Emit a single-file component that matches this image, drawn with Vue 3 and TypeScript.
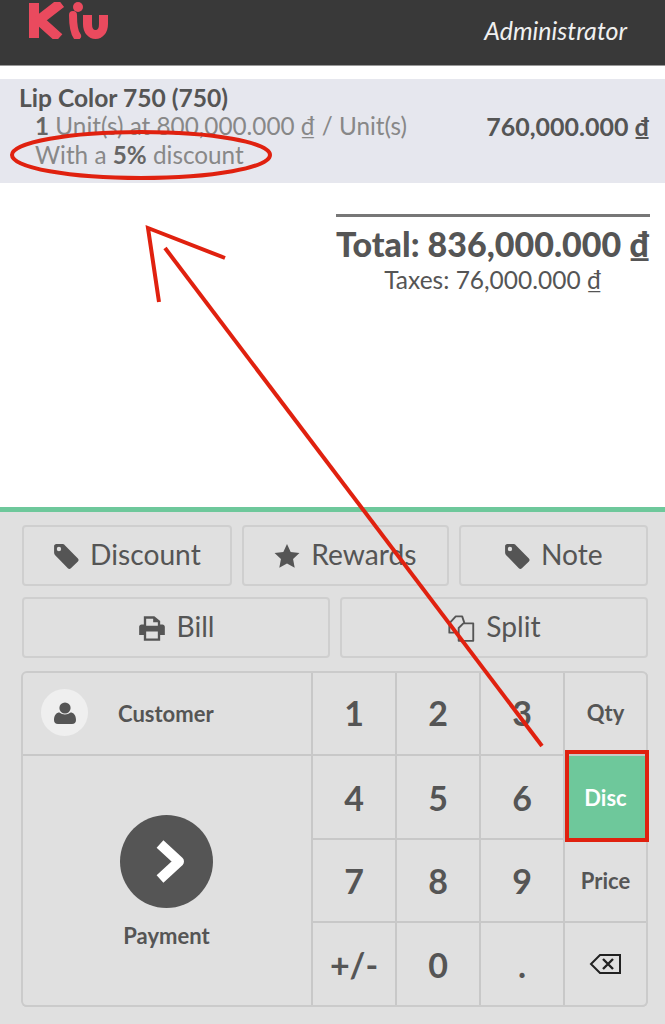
<template>
  <div class="pos">
    <header class="topbar">
      <svg class="logo" width="80" height="37" viewBox="0 0 80 37" fill="none" stroke="#ea4a5e" stroke-width="10">
        <path d="M5 1V36" />
        <path d="M32 1L10 18L30 36" />
        <path d="M44 13C44 22 45 30 48 34" stroke-width="8" stroke-linecap="round" />
        <circle cx="49" cy="5" r="5" fill="#ea4a5e" stroke="none" />
        <path d="M58.500 13V22C58.500 36 74.500 36 74.500 22V13" stroke-width="9" />
      </svg>
      <span class="username">Administrator</span>
    </header>

    <main class="order">
      <div class="orderline">
        <div class="line-info">
          <div class="product">Lip Color 750 (750)</div>
          <div class="detail"><b>1</b> Unit(s) at 800,000.000 ₫ / Unit(s)</div>
          <div class="detail">With a <b>5%</b> discount</div>
        </div>
        <div class="price">760,000.000 ₫</div>
      </div>
      <div class="summary">
        <div class="total">Total: 836,000.000 ₫</div>
        <div class="taxes">Taxes: 76,000.000 ₫</div>
      </div>
    </main>

    <section class="panel">
      <div class="control-row">
        <button v-for="b in topButtons" :key="b.label" class="control" :style="{ flexGrow: b.grow }">
          <svg width="26" height="26" viewBox="0 0 24 24" v-html="icons[b.icon]"></svg>
          <span class="control-label">{{ b.label }}</span>
        </button>
      </div>
      <div class="control-row">
        <button v-for="b in midButtons" :key="b.label" class="control" :style="{ flexGrow: 1 }">
          <svg width="28" height="28" viewBox="0 0 24 24" v-html="icons[b.icon]"></svg>
          <span class="control-label">{{ b.label }}</span>
        </button>
      </div>

      <div class="numpad">
        <div class="customer cell">
          <span class="avatar">
            <svg width="24" height="24" viewBox="0 0 24 24" fill="#555">
              <circle cx="12" cy="7" r="5.600" />
              <path d="M1 19c0-5 2.500-7.500 5.500-7.500 1.500 1.300 3.300 2 5.500 2s4-.7 5.500-2c3 0 5.500 2.500 5.500 7.500 0 2.500-1.500 4-4 4H5c-2.500 0-4-1.500-4-4z" />
            </svg>
          </span>
          <span class="customer-label">Customer</span>
        </div>
        <div class="payment cell">
          <span class="pay-circle">
            <svg width="40" height="48" viewBox="0 0 40 48" fill="none" stroke="#fff" stroke-width="10" stroke-linejoin="round">
              <path d="M13 7L32 24.500L13 42" />
            </svg>
          </span>
          <span class="pay-label">Payment</span>
        </div>
        <div v-for="k in keys" :key="k.label" class="cell key" :class="{ mode: k.mode, active: k.active }">
          <svg v-if="k.label === 'back'" width="34" height="24" viewBox="0 0 34 24" fill="none" stroke="#222" stroke-width="2">
            <path d="M31 3H11L2 12L11 21H31Z" />
            <path d="M14 7L24 17M24 7L14 17" stroke-width="2.400" />
          </svg>
          <template v-else>{{ k.label }}</template>
        </div>
      </div>
    </section>

    <svg class="marks" width="665" height="1024" viewBox="0 0 665 1024" fill="none" stroke="#e0210f">
      <ellipse cx="141" cy="155" rx="129" ry="23" stroke-width="4" />
      <path d="M542 746L165 248" stroke-width="4" />
      <path d="M159 302L148 228L225 258" stroke-width="4" />
      <rect x="567" y="752" width="80" height="88" stroke-width="4" />
    </svg>
  </div>
</template>

<script setup lang="ts">
type IconName = "tag" | "star" | "print" | "copy";

const icons: Record<IconName, string> = {
  tag: '<path fill="#555" fill-rule="evenodd" d="M1 3C1 1.900 1.900 1 3 1H8.500C9.500 1 10.200 1.300 10.900 2L23 14.200C23.800 15 23.800 16.200 23 17L16.500 23.300C15.700 24.100 14.500 24.100 13.700 23.300L2 11.200C1.300 10.500 1 9.700 1 8.800ZM5.500 3.500A2 2 0 1 0 5.500 7.500A2 2 0 1 0 5.500 3.500Z"/>',
  star: '<path fill="#555" d="M12 1L15.400 8.200L23.500 9.300L17.600 14.800L19.100 22.800L12 19L4.900 22.800L6.400 14.800L.5 9.300L8.600 8.200Z"/>',
  print: '<path fill="#555" fill-rule="evenodd" d="M5 2H14L19 6V9H21C22.100 9 23 9.900 23 11V18H19V23H5V18H1V11C1 9.900 1.900 9 3 9H5ZM7 4V10H17V7H13V4ZM7 15V21H17V15Z"/>',
  copy: '<path fill="none" stroke="#555" stroke-width="1.600" stroke-linejoin="round" d="M14 8H22.500V23H10V12ZM6 16H2V8L7.500 2H13L15 8"/>',
};

const topButtons: { label: string; icon: IconName; grow: number }[] = [
  { label: "Discount", icon: "tag", grow: 210 },
  { label: "Rewards", icon: "star", grow: 207 },
  { label: "Note", icon: "tag", grow: 189 },
];

const midButtons: { label: string; icon: IconName }[] = [
  { label: "Bill", icon: "print" },
  { label: "Split", icon: "copy" },
];

const keys: { label: string; mode?: boolean; active?: boolean }[] = [
  { label: "1" },
  { label: "2" },
  { label: "3" },
  { label: "Qty", mode: true },
  { label: "4" },
  { label: "5" },
  { label: "6" },
  { label: "Disc", mode: true, active: true },
  { label: "7" },
  { label: "8" },
  { label: "9" },
  { label: "Price", mode: true },
  { label: "+/-" },
  { label: "0" },
  { label: "." },
  { label: "back", mode: true },
];
</script>

<style>
html,
body {
  margin: 0;
  background: #fff;
}
</style>

<style scoped>
.pos {
  position: relative;
  width: 665px;
  height: 1024px;
  overflow: hidden;
  display: flex;
  flex-direction: column;
  font-family: Lato, "Open Sans", sans-serif;
  color: #555;
}

.topbar {
  height: 66px;
  flex-shrink: 0;
  box-sizing: border-box;
  background: #393939;
  border-bottom: 1px solid #999;
  display: flex;
  align-items: flex-start;
  justify-content: space-between;
  padding: 0 38px 0 29px;
}
.logo {
  margin-top: 2px;
}
.username {
  margin-top: 15px;
  color: #f0f0f0;
  font-size: 25px;
  line-height: 30px;
  font-style: italic;
}

.order {
  flex: 1;
  padding-top: 13px;
  background: #fff;
}
.orderline {
  height: 104px;
  box-sizing: border-box;
  background: #e6e7ee;
  padding: 5px 15px 0 19px;
  display: flex;
  justify-content: space-between;
}
.product {
  font-size: 24.600px;
  line-height: 28px;
  font-weight: 700;
  color: #555;
}
.detail {
  padding-left: 16px;
  font-size: 24.300px;
  line-height: 28.500px;
  color: #888;
}
.detail b {
  color: #666;
}
.price {
  margin-top: 28px;
  font-size: 25px;
  line-height: 28px;
  font-weight: 700;
  color: #555;
}
.summary {
  margin: 31px 15px 0 auto;
  width: 314px;
  border-top: 3px solid #777;
  text-align: center;
}
.total {
  margin-top: 8px;
  font-size: 34px;
  line-height: 38px;
  font-weight: 900;
  white-space: nowrap;
}
.taxes {
  margin-top: 2px;
  font-size: 24.500px;
  line-height: 30px;
}

.panel {
  height: 517px;
  flex-shrink: 0;
  box-sizing: border-box;
  background: #e0e0e0;
  border-top: 5px solid #6ec89b;
  padding: 13px 17px 0 22px;
}
.control-row {
  display: flex;
  gap: 10px;
  margin-bottom: 11px;
}
.control {
  flex: 1 1 0;
  height: 61px;
  box-sizing: border-box;
  display: flex;
  align-items: center;
  justify-content: center;
  gap: 11px;
  background: #e0e0e0;
  border: 2px solid #cfcfcf;
  border-radius: 4px;
  font-family: inherit;
  font-size: 28.200px;
  color: #555;
  padding: 0;
}
.control-label {
  padding-bottom: 3px;
}

.numpad {
  margin: 13px 0 0 -1px;
  display: grid;
  grid-template-columns: 292px repeat(3, 84px) 83px;
  grid-template-rows: 85px 84px 83px 84px;
  border-radius: 6px;
  outline: 2px solid #cbcbcb;
  outline-offset: -2px;
  overflow: hidden;
}
.cell {
  box-sizing: border-box;
  border-right: 2px solid #c8c8c8;
  border-bottom: 2px solid #c8c8c8;
  display: flex;
  align-items: center;
  justify-content: center;
}
.customer {
  grid-column: 1;
  grid-row: 1;
  justify-content: flex-start;
  padding: 0 0 0 20px;
  gap: 30px;
}
.avatar {
  width: 47px;
  height: 47px;
  border-radius: 50%;
  background: #efefef;
  display: flex;
  align-items: center;
  justify-content: center;
}
.customer-label {
  padding-top: 2px;
}
.customer-label,
.pay-label {
  font-size: 22px;
  font-weight: 700;
}
.payment {
  grid-column: 1;
  grid-row: 2 / span 3;
  flex-direction: column;
  gap: 14px;
  padding: 2px 0 0 1px;
}
.pay-circle {
  width: 93px;
  height: 93px;
  border-radius: 50%;
  background: #555;
  display: flex;
  align-items: center;
  justify-content: center;
}
.key {
  font-size: 34px;
  font-weight: 700;
}
.key.mode {
  font-size: 22px;
}
.key.active {
  background: #6ec89b;
  color: #fff;
}

.marks {
  position: absolute;
  left: 0;
  top: 0;
  pointer-events: none;
}
</style>
